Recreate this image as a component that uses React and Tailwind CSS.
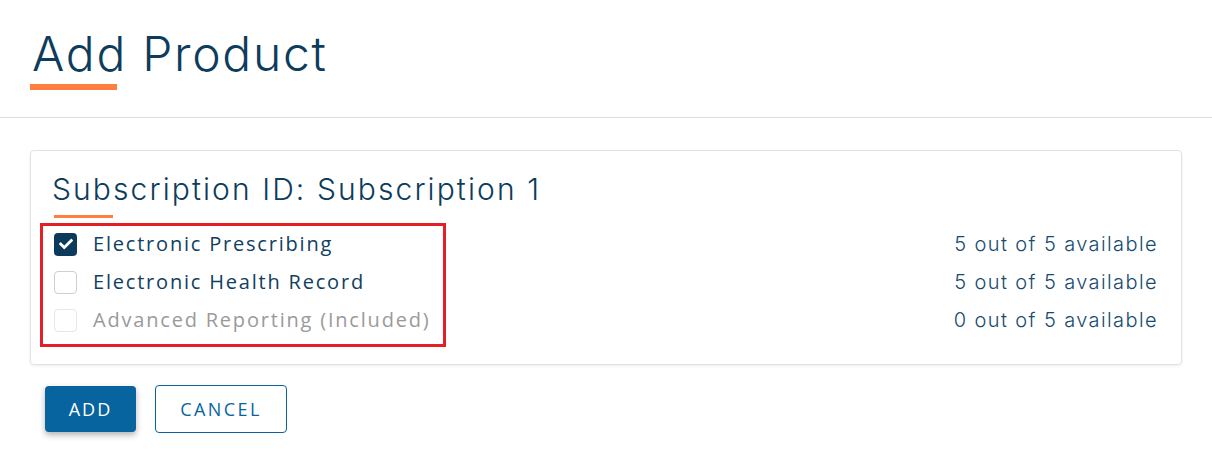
import { FaCheck } from "react-icons/fa";

const rows = [
  { label: "Electronic Prescribing", avail: "5 out of 5 available", checked: true },
  { label: "Electronic Health Record", avail: "5 out of 5 available" },
  { label: "Advanced Reporting (Included)", avail: "0 out of 5 available", disabled: true },
];

function Box({ checked, disabled }) {
  if (checked) {
    return (
      <span className="flex h-[23px] w-[23px] items-center justify-center rounded-[4px] bg-[#0c3a5b]">
        <FaCheck className="h-[14px] w-[14px] text-white" />
      </span>
    );
  }
  return (
    <span
      className={
        "block h-[23px] w-[23px] rounded-[4px] border bg-white " +
        (disabled ? "border-[#e6e6e6]" : "border-[#cfcfcf]")
      }
    />
  );
}

export default function App() {
  const head = { fontFamily: "Inter, 'Open Sans', sans-serif" };
  const body = { fontFamily: "'Open Sans', Lato, sans-serif" };

  return (
    <div className="min-h-[462px] w-[1212px] bg-white text-[#0d3c5c]">
      <div className="border-b border-[#dedede] px-[30px] pt-[26px] pb-[27px]">
        <h1 className="pl-[2px] text-[48px] font-light leading-[56px] tracking-[1.7px]" style={head}>
          Add Product
        </h1>
        <div className="mt-[2px] h-[6px] w-[87px] bg-[#ff7e40]" />
      </div>

      <div className="px-[30px] pt-[32px]">
        <div className="rounded-[4px] border border-[#e2e2e2] pt-[20px] pb-[16px] shadow-[0_1px_3px_rgba(0,0,0,0.08)]">
          <h2 className="pl-[21px] text-[30px] font-light leading-[36px] tracking-[2.1px]" style={head}>
            Subscription ID: Subscription 1
          </h2>
          <div className="mt-[8px] ml-[23px] h-[3px] w-[59px] bg-[#ff7e40]" />

          <div className="relative mt-[5px] flex flex-col pb-[9px] pl-[23px] pr-[23px]">
            <div className="pointer-events-none absolute top-0 left-[9px] h-[124px] w-[406px] border-[3px] border-[#e41f26]" />
            {rows.map((r, i) => (
              <div key={r.label} className={"flex h-[38px] items-center " + (i === 0 ? "mt-[2px]" : "")}>
                <Box checked={r.checked} disabled={r.disabled} />
                <span
                  className={
                    "ml-[16px] text-[20px] tracking-[1.8px] " +
                    (r.disabled ? "text-[#9a9a9a]" : "text-[#10405f]")
                  }
                  style={body}
                >
                  {r.label}
                </span>
                <span className="ml-auto text-[20px] font-light tracking-[1.4px] text-[#174b6e]" style={head}>
                  {r.avail}
                </span>
              </div>
            ))}
          </div>
        </div>

        <div className="mt-[20px] flex items-center gap-[19px] pl-[15px]">
          <button
            className="h-[46px] w-[91px] rounded-[4px] bg-[#07649f] text-[18px] tracking-[2px] text-white shadow-[0_3px_6px_rgba(0,0,0,0.3)]"
            style={body}
          >
            ADD
          </button>
          <button
            className="h-[48px] w-[132px] rounded-[4px] border border-[#07649f] bg-white text-[18px] tracking-[2.4px] text-[#07649f]"
            style={body}
          >
            CANCEL
          </button>
        </div>
      </div>
    </div>
  );
}
